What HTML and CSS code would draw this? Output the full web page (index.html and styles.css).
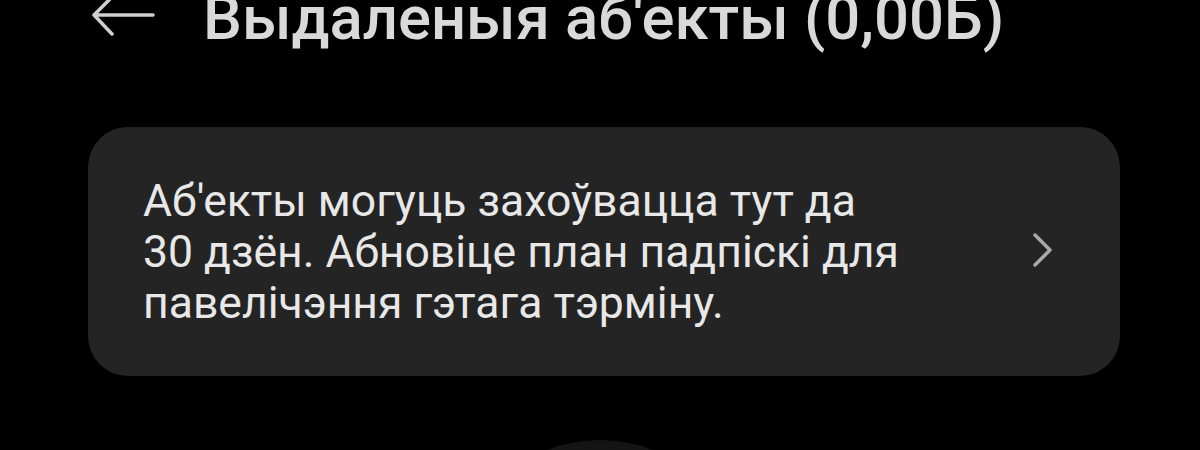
FILE: index.html
```html
<!DOCTYPE html>
<html lang="be">
<head>
<meta charset="utf-8">
<title>Выдаленыя аб'екты</title>
<link rel="stylesheet" href="styles.css">
</head>
<body>
<header class="topbar">
  <svg class="back" width="66" height="40" viewBox="0 0 66 40" aria-hidden="true">
    <path d="M3 17 H62 M3 17 L20 0 M3 17 L21 36" fill="none" stroke="#cfcfcf" stroke-width="3.5" stroke-linecap="round" stroke-linejoin="round"/>
  </svg>
  <h1 class="title">Выдаленыя аб'екты (0,00Б)</h1>
</header>
<main class="content">
  <section class="card">
    <p class="card-text">Аб'екты могуць захоўвацца тут да<br>30 дзён. Абновіце план падпіскі для<br>павелічэння гэтага тэрміну.</p>
    <svg class="chevron" width="22" height="38" viewBox="0 0 22 38" aria-hidden="true">
      <path d="M3 3 L18 18 L3 33" fill="none" stroke="#a9a9a9" stroke-width="3.5" stroke-linecap="round" stroke-linejoin="round"/>
    </svg>
  </section>
</main>
<div class="fab"></div>
</body>
</html>
```

FILE: styles.css
```css
html, body {
  margin: 0;
  padding: 0;
  background: #000;
  height: 450px;
  overflow: hidden;
}
body {
  font-family: Roboto, "Noto Sans", sans-serif;
  position: relative;
}
.topbar {
  display: flex;
  align-items: flex-start;
  height: 36px;
  padding-left: 91px;
}
.back {
  display: block;
  margin-top: -2px;
  flex: none;
}
.title {
  margin: 0 0 0 46px;
  font-size: 61.6px;
  line-height: 36px;
  font-weight: 500;
  color: #d9d9d9;
  white-space: nowrap;
}
.content {
  padding: 91px 80px 0 88px;
}
.card {
  display: flex;
  align-items: center;
  justify-content: space-between;
  background: #242424;
  border-radius: 40px;
  padding: 49px 66px 47px 55px;
}
.card-text {
  margin: 0;
  font-size: 44.5px;
  line-height: 51px;
  color: #e8e8e8;
  white-space: nowrap;
}
.chevron {
  display: block;
  flex: none;
  margin-top: -4px;
}
.fab {
  position: absolute;
  left: 455px;
  top: 440px;
  width: 290px;
  height: 290px;
  border-radius: 50%;
  background: #141414;
}
```
